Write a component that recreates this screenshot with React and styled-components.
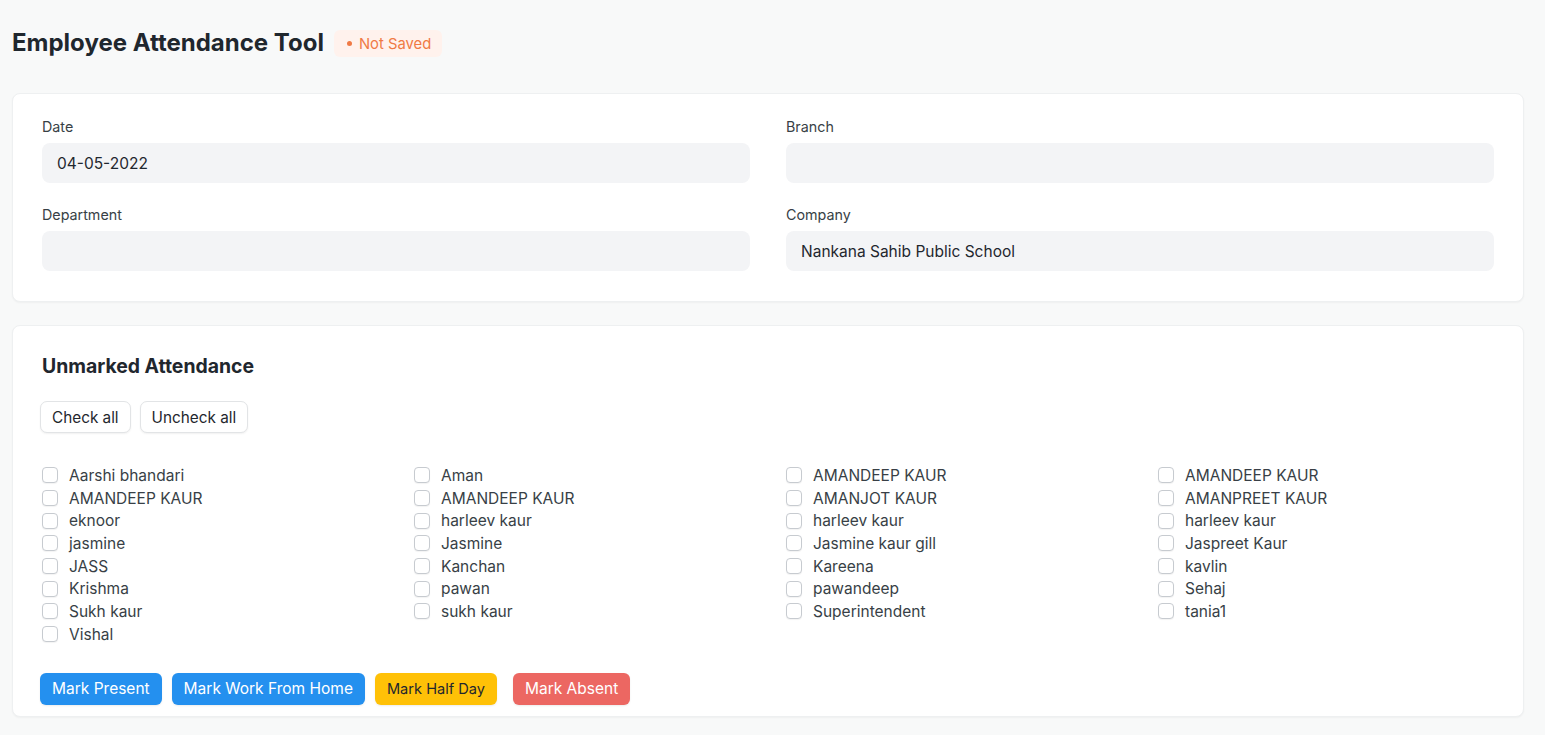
import styled, { createGlobalStyle } from "styled-components";

const GlobalStyle = createGlobalStyle`
  html, body {
    margin: 0;
    background: #f8f9f9;
    font-family: Inter, "Noto Sans", sans-serif;
    color: #1f272e;
  }
`;

const Page = styled.div`
  padding: 26px 21px 20px 12px;
`;

const Header = styled.div`
  display: flex;
  align-items: center;
  gap: 10px;
  height: 32px;
  margin-bottom: 35px;
`;

const Title = styled.h1`
  margin: 0;
  font-size: 24px;
  font-weight: 700;
  color: #1f272e;
`;

const Badge = styled.span`
  display: inline-flex;
  align-items: center;
  gap: 7px;
  height: 27px;
  padding: 0 11px 0 13px;
  border-radius: 6px;
  background: #fff2ed;
  color: #f07a45;
  font-size: 14.8px;
  margin-top: 3px;

  &::before {
    content: "";
    width: 5px;
    height: 5px;
    border-radius: 50%;
    background: currentColor;
  }
`;

const Card = styled.section`
  background: #fff;
  border-radius: 8px;
  border: 1px solid #eef0f1;
  box-shadow: 0 1px 2px rgba(0, 0, 0, 0.04);
  padding: ${(p) => p.$pad || "24px 29px 30px"};
  margin-bottom: 23px;
`;

const FieldGrid = styled.div`
  display: grid;
  grid-template-columns: 1fr 1fr;
  column-gap: 36px;
  row-gap: 23px;
`;

const Field = styled.div`
  display: flex;
  flex-direction: column;
`;

const Label = styled.label`
  font-size: 14.3px;
  color: #383f46;
  line-height: 18px;
  margin-bottom: 7px;
`;

const Input = styled.div`
  height: 40px;
  border-radius: 8px;
  background: #f3f4f6;
  display: flex;
  align-items: center;
  padding: 0 15px;
  font-size: 15.5px;
  color: #1f272e;
`;

const SectionTitle = styled.h2`
  margin: 0 0 23px 0;
  font-size: 19.4px;
  font-weight: 700;
  color: #1f272e;
  line-height: 24px;
`;

const ButtonRow = styled.div`
  display: flex;
  gap: ${(p) => p.$gap || 9}px;
  margin-left: -2px;
`;

const PlainButton = styled.button`
  height: 32px;
  padding: 0 11px;
  border: 1px solid #e2e4e6;
  border-radius: 7px;
  background: #fff;
  box-shadow: 0 1px 2px rgba(0, 0, 0, 0.06);
  font-family: inherit;
  font-size: 15.3px;
  color: #1f272e;
`;

const ActionButton = styled.button`
  height: 32px;
  padding: 0 12px;
  border: none;
  border-radius: 6px;
  background: ${(p) => p.$bg};
  color: ${(p) => p.$fg || "#fff"};
  font-family: inherit;
  font-size: ${(p) => p.$fs || 15.5}px;
  margin-right: ${(p) => p.$extra || 0}px;
  box-shadow: 0 1px 2px rgba(0, 0, 0, 0.08);
`;

const NameGrid = styled.div`
  display: grid;
  grid-template-columns: repeat(4, 1fr);
  column-gap: 36px;
  margin: 31px 0 27px;
`;

const Column = styled.div`
  display: flex;
  flex-direction: column;
`;

const CheckRow = styled.label`
  display: flex;
  align-items: center;
  gap: 11px;
  height: 22.7px;
  font-size: 15.5px;
  color: #383f46;
`;

const Box = styled.span`
  width: 16px;
  height: 16px;
  box-sizing: border-box;
  border: 1px solid #c7cbd0;
  border-radius: 4px;
  background: #fff;
  box-shadow: 0 1px 1px rgba(0, 0, 0, 0.05);
  flex-shrink: 0;
`;

const columns = [
  ["Aarshi bhandari", "AMANDEEP KAUR", "eknoor", "jasmine", "JASS", "Krishma", "Sukh kaur", "Vishal"],
  ["Aman", "AMANDEEP KAUR", "harleev kaur", "Jasmine", "Kanchan", "pawan", "sukh kaur"],
  ["AMANDEEP KAUR", "AMANJOT KAUR", "harleev kaur", "Jasmine kaur gill", "Kareena", "pawandeep", "Superintendent"],
  ["AMANDEEP KAUR", "AMANPREET KAUR", "harleev kaur", "Jaspreet Kaur", "kavlin", "Sehaj", "tania1"],
];

const App = () => {
  return (
    <Page>
      <GlobalStyle />
      <Header>
        <Title>Employee Attendance Tool</Title>
        <Badge>Not Saved</Badge>
      </Header>

      <Card>
        <FieldGrid>
          <Field>
            <Label>Date</Label>
            <Input>04-05-2022</Input>
          </Field>
          <Field>
            <Label>Branch</Label>
            <Input />
          </Field>
          <Field>
            <Label>Department</Label>
            <Input />
          </Field>
          <Field>
            <Label>Company</Label>
            <Input>Nankana Sahib Public School</Input>
          </Field>
        </FieldGrid>
      </Card>

      <Card $pad="28px 29px 11px">
        <SectionTitle>Unmarked Attendance</SectionTitle>
        <ButtonRow>
          <PlainButton>Check all</PlainButton>
          <PlainButton>Uncheck all</PlainButton>
        </ButtonRow>
        <NameGrid>
          {columns.map((col, i) => (
            <Column key={i}>
              {col.map((name, j) => (
                <CheckRow key={j}>
                  <Box />
                  {name}
                </CheckRow>
              ))}
            </Column>
          ))}
        </NameGrid>
        <ButtonRow $gap={10}>
          <ActionButton $bg="#2490ef">Mark Present</ActionButton>
          <ActionButton $bg="#2490ef">Mark Work From Home</ActionButton>
          <ActionButton $bg="#ffc107" $fg="#1f272e" $fs={14.6} $extra={6}>Mark Half Day</ActionButton>
          <ActionButton $bg="#ec6762">Mark Absent</ActionButton>
        </ButtonRow>
      </Card>
    </Page>
  );
};

export default App;
